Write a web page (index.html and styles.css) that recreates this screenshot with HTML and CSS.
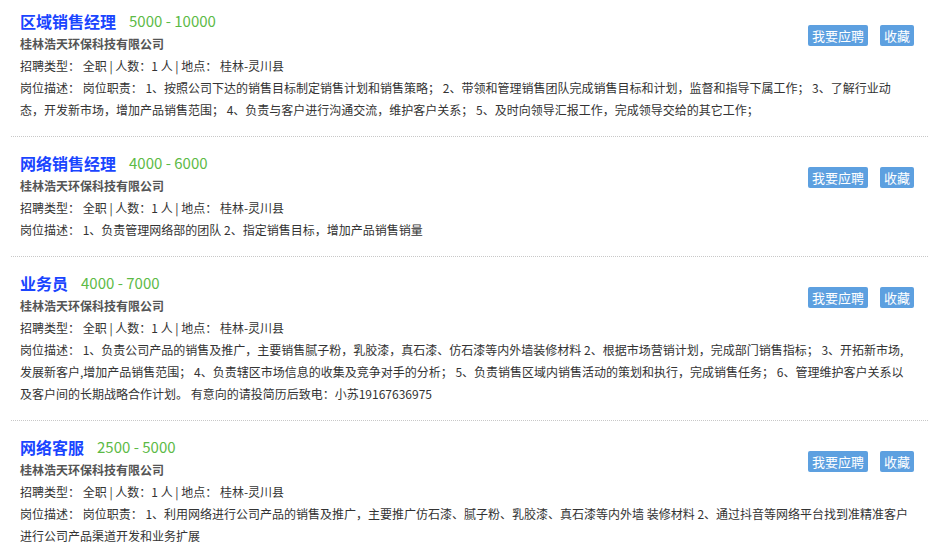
FILE: index.html
```html
<!DOCTYPE html>
<html>
  <head>
    <meta charset="utf-8">
    <title>招聘信息</title>
    <link rel="stylesheet" href="styles.css">
  </head>
  <body>
    <ul class="jobs">
      <li class="job">
        <div class="actions"><a class="btn">我要应聘</a><a class="btn">收藏</a></div>
        <div class="job-title"><a class="name">区域销售经理</a><span class="salary">5000 - 10000</span></div>
        <div class="company">桂林浩天环保科技有限公司</div>
        <div class="meta">招聘类型： 全职 | 人数：1 人 | 地点： 桂林-灵川县</div>
        <div class="desc">岗位描述： 岗位职责： 1、按照公司下达的销售目标制定销售计划和销售策略； 2、带领和管理销售团队完成销售目标和计划，监督和指导下属工作； 3、了解行业动<br>态，开发新市场，增加产品销售范围； 4、负责与客户进行沟通交流，维护客户关系； 5、及时向领导汇报工作，完成领导交给的其它工作；</div>
      </li>
      <li class="job">
        <div class="actions"><a class="btn">我要应聘</a><a class="btn">收藏</a></div>
        <div class="job-title"><a class="name">网络销售经理</a><span class="salary">4000 - 6000</span></div>
        <div class="company">桂林浩天环保科技有限公司</div>
        <div class="meta">招聘类型： 全职 | 人数：1 人 | 地点： 桂林-灵川县</div>
        <div class="desc">岗位描述： 1、负责管理网络部的团队 2、指定销售目标，增加产品销售销量</div>
      </li>
      <li class="job">
        <div class="actions"><a class="btn">我要应聘</a><a class="btn">收藏</a></div>
        <div class="job-title"><a class="name">业务员</a><span class="salary">4000 - 7000</span></div>
        <div class="company">桂林浩天环保科技有限公司</div>
        <div class="meta">招聘类型： 全职 | 人数：1 人 | 地点： 桂林-灵川县</div>
        <div class="desc">岗位描述： 1、负责公司产品的销售及推广，主要销售腻子粉，乳胶漆，真石漆、仿石漆等内外墙装修材料 2、根据市场营销计划，完成部门销售指标； 3、开拓新市场,<br>发展新客户,增加产品销售范围； 4、负责辖区市场信息的收集及竞争对手的分析； 5、负责销售区域内销售活动的策划和执行，完成销售任务； 6、管理维护客户关系以<br>及客户间的长期战略合作计划。 有意向的请投简历后致电：小苏19167636975</div>
      </li>
      <li class="job">
        <div class="actions"><a class="btn">我要应聘</a><a class="btn">收藏</a></div>
        <div class="job-title"><a class="name">网络客服</a><span class="salary">2500 - 5000</span></div>
        <div class="company">桂林浩天环保科技有限公司</div>
        <div class="meta">招聘类型： 全职 | 人数：1 人 | 地点： 桂林-灵川县</div>
        <div class="desc">岗位描述： 岗位职责： 1、利用网络进行公司产品的销售及推广，主要推广仿石漆、腻子粉、乳胶漆、真石漆等内外墙 装修材料 2、通过抖音等网络平台找到准精准客户<br>进行公司产品渠道开发和业务扩展</div>
      </li>
    </ul>
  </body>
</html>
```

FILE: styles.css
```css
body { margin: 0; font-family: "Microsoft YaHei", "Noto Sans CJK SC", sans-serif; font-size: 12px; color: #333; background: #fff; }

.jobs { list-style: none; margin: 0 7px 0 11px; padding: 0; }
.job { padding: 14px 14px 15px 9px; border-bottom: 1px dotted #c8c8c8; }
.job:first-child { padding-top: 9px; }
.job:last-child { border-bottom: none; }

.actions { float: right; margin-top: 16px; display: flex; gap: 12px; }
.btn { display: block; height: 21px; line-height: 21px; padding: 0 4px; background: #5da0e0; color: #fff; font-size: 13px; border-radius: 2px; cursor: pointer; }

.job-title { display: flex; align-items: center; height: 24px; }
.job-title .name { font-size: 16px; font-weight: bold; color: #1a45ff; line-height: 24px; }
.job-title .salary { margin-left: 13px; font-size: 15px; color: #5cba46; line-height: 24px; }

.company { height: 22px; line-height: 22px; font-weight: bold; color: #555; }
.meta { height: 22px; line-height: 22px; }
.desc { line-height: 22px; white-space: nowrap; }
```
